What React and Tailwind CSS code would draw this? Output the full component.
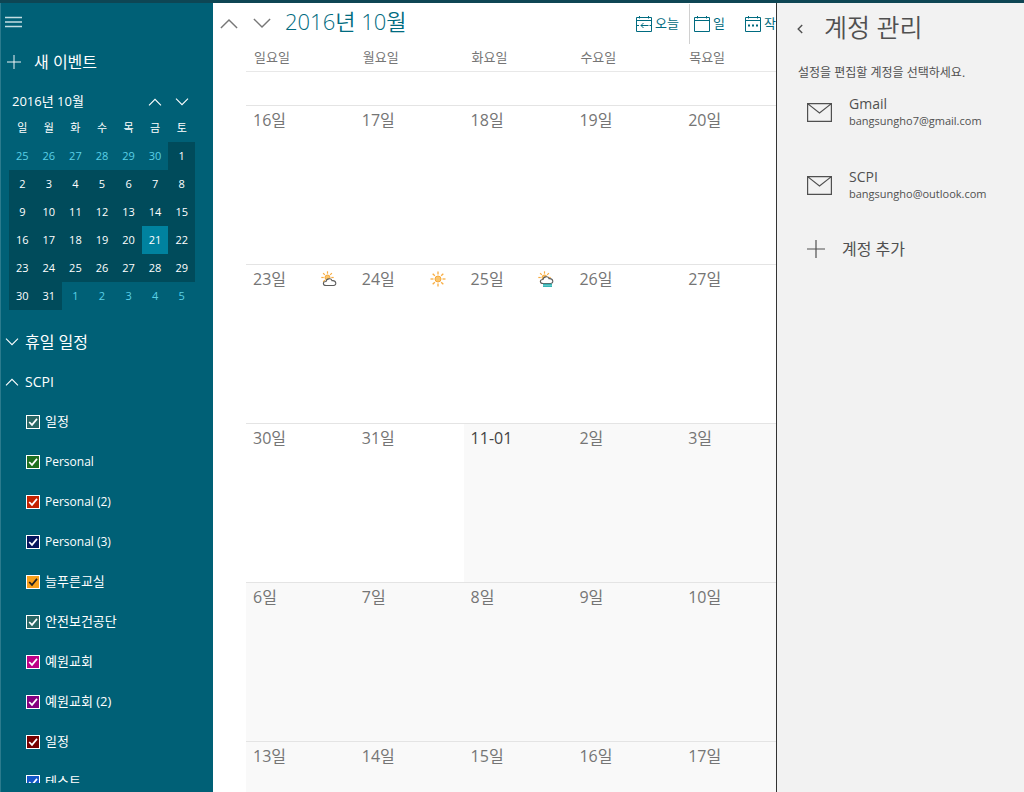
import React from "react";

const weekdays = ["일", "월", "화", "수", "목", "금", "토"];

const miniWeeks = [
  [25, 26, 27, 28, 29, 30, 1],
  [2, 3, 4, 5, 6, 7, 8],
  [9, 10, 11, 12, 13, 14, 15],
  [16, 17, 18, 19, 20, 21, 22],
  [23, 24, 25, 26, 27, 28, 29],
  [30, 31, 1, 2, 3, 4, 5],
];

const weeks = [
  ["16일", "17일", "18일", "19일", "20일"],
  ["23일", "24일", "25일", "26일", "27일"],
  ["30일", "31일", "11-01", "2일", "3일"],
  ["6일", "7일", "8일", "9일", "10일"],
  ["13일", "14일", "15일", "16일", "17일"],
];

const weather = { "23일": "cloud", "24일": "sun", "25일": "fog" };

const calendars = [
  { name: "일정", color: "bg-[#2a6663]" },
  { name: "Personal", color: "bg-[#1f6f20]", latin: true },
  { name: "Personal (2)", color: "bg-[#c42200]", latin: true },
  { name: "Personal (3)", color: "bg-[#07155c]", latin: true },
  { name: "늘푸른교실", color: "bg-[#f9a01b]", dark: true },
  { name: "안전보건공단", color: "bg-[#2a6663]" },
  { name: "예원교회", color: "bg-[#bd0086]" },
  { name: "예원교회 (2)", color: "bg-[#85007f]" },
  { name: "일정", color: "bg-[#760000]" },
  { name: "테스트", color: "bg-[#1456c8]" },
];

const accounts = [
  { name: "Gmail", email: "bangsungho7@gmail.com" },
  { name: "SCPI", email: "bangsungho@outlook.com" },
];

function Chevron({ up = false, className }) {
  return (
    <svg viewBox="0 0 20 12" fill="none" stroke="currentColor" className={className} aria-hidden="true">
      <path d={up ? "M1 11 10 2l9 9" : "M1 1l9 9 9-9"} strokeWidth="1.600" />
    </svg>
  );
}

function Plus({ className }) {
  return (
    <svg viewBox="0 0 18 18" fill="none" stroke="currentColor" className={className} aria-hidden="true">
      <path d="M9 0v18M0 9h18" strokeWidth="1.2" />
    </svg>
  );
}

function CalendarIcon({ kind }) {
  return (
    <svg viewBox="0 0 16 16" fill="none" stroke="currentColor" className="size-4 shrink-0" aria-hidden="true">
      <path d="M.5 1.5h15v14H.5zM.5 4.5h15M3.5 0v2.500M12.500 0v2.500" />
      {kind === "today" && <path d="M12.500 9.500H5M7.500 7l-2.500 2.500 2.500 2.500M1 9.500h2M13.500 9.500H15" />}
      {kind === "workweek" && <path d="M3 9.500h2M7 9.500h2M11 9.500h2" strokeWidth="1.800" />}
    </svg>
  );
}

function Weather({ kind }) {
  const rays = [0, 45, 90, 135, 180, 225, 270, 315];
  if (kind === "sun") {
    return (
      <svg viewBox="0 0 16 16" className="size-4" role="img" aria-label="맑음">
        <circle cx="8" cy="8" r="3" fill="#fbc56d" stroke="#f5a83a" />
        {rays.map((r) => (
          <path key={r} d="M8 .5v3" stroke="#f8ad42" strokeWidth="1.300" transform={`rotate(${r} 8 8)`} />
        ))}
      </svg>
    );
  }
  const fog = kind === "fog";
  return (
    <svg viewBox="0 0 16 16" className="size-4" role="img" aria-label={fog ? "안개" : "구름 조금"}>
      <circle cx="6.500" cy="6.500" r="2.500" fill="#fbc56d" stroke="#f5a83a" />
      {rays.map((r) => (
        <path key={r} d="M6.500 .3v2.400" stroke="#f8ad42" strokeWidth="1.200" transform={`rotate(${r} 6.500 6.500)`} />
      ))}
      <g transform={fog ? "translate(0 -2)" : undefined}>
        <path
          d="M5 14.500c-3.500 0-3.500-4 0-4 .3-3.200 5.200-3.600 6-.8 4.500-.6 5 4.800 1.500 4.800z"
          fill="#fff"
          stroke="#5c5c5c"
          strokeWidth="1.100"
        />
      </g>
      {fog && <path d="M5 13.500h9M5 15.300h9" stroke="#35b5b5" strokeWidth="1.400" />}
    </svg>
  );
}

function MiniCalendar() {
  return (
    <table className="ml-2 w-[186px] table-fixed border-collapse text-center text-[11px]">
      <thead>
        <tr className="h-7">
          {weekdays.map((d) => (
            <th key={d} scope="col" className="p-0 font-normal text-white">{d}</th>
          ))}
        </tr>
      </thead>
      <tbody>
        {miniWeeks.map((week, w) => (
          <tr key={w}>
            {week.map((day, i) => {
              const outside = (w === 0 && day > 20) || (w === 5 && day < 10);
              const today = w === 3 && i === 5;
              const tone = today
                ? "bg-[#00829f] text-white"
                : outside
                  ? "text-[#5bd0e6]"
                  : "bg-[#004b5b] text-white";
              return (
                <td key={i} className="p-0">
                  <button type="button" className={`block h-7 w-full ${tone}`}>{day}</button>
                </td>
              );
            })}
          </tr>
        ))}
      </tbody>
    </table>
  );
}

function Sidebar() {
  return (
    <aside className="flex w-[213px] shrink-0 flex-col border-l border-[#2b7b8d] bg-[#006076] pb-[9px] text-white">
      <button type="button" aria-label="메뉴" className="mt-[13px] ml-1 w-[17px]">
        <svg viewBox="0 0 17 12" fill="none" stroke="#c4dde2" className="block h-3 w-[17px]" aria-hidden="true">
          <path d="M0 1.500h17M0 6h17M0 10.500h17" strokeWidth="1.400" />
        </svg>
      </button>
      <button type="button" className="mt-[14px] ml-1.5 flex h-10 items-center gap-[13px] text-base">
        <Plus className="size-3.5" />
        새 이벤트
      </button>
      <div className="mt-1 flex h-8 items-center pl-[11px]">
        <h2 className="w-[136px] text-[13px]">2016년 10월</h2>
        <button type="button" aria-label="이전 달" className="w-[27px]">
          <Chevron up className="h-2 w-3.5" />
        </button>
        <button type="button" aria-label="다음 달">
          <Chevron className="h-2 w-3.5" />
        </button>
      </div>
      <div className="-mt-1">
        <MiniCalendar />
      </div>
      <button type="button" aria-expanded="false" className="mt-3 flex h-10 items-center gap-1.5 pl-1 text-base">
        <Chevron className="h-2 w-3.5" />
        휴일 일정
      </button>
      <button type="button" aria-expanded="true" className="flex h-10 items-center gap-1.5 pl-1 text-sm">
        <Chevron up className="h-2 w-3.5" />
        SCPI
      </button>
      <ul className="min-h-0 flex-1 overflow-hidden">
        {calendars.map((c, i) => (
          <li key={i}>
            <label className={`flex h-10 items-center gap-[5px] pl-[25px] ${c.latin ? "text-xs" : "text-[13px]"}`}>
              <span className="grid">
                <input
                  type="checkbox"
                  defaultChecked
                  className={`peer col-start-1 row-start-1 size-3.5 appearance-none border border-white ${c.color}`}
                />
                <svg
                  viewBox="0 0 14 14"
                  fill="none"
                  className="pointer-events-none invisible col-start-1 row-start-1 size-3.5 peer-checked:visible"
                  aria-hidden="true"
                >
                  <path d="M3.200 7l2.800 2.900 5-6" stroke={c.dark ? "#222" : "#fff"} strokeWidth="1.700" />
                </svg>
              </span>
              {c.name}
            </label>
          </li>
        ))}
      </ul>
    </aside>
  );
}

function Month() {
  return (
    <main className="min-w-0 flex-1 overflow-hidden bg-white">
      <header className="flex h-[41px] items-center pl-[7px] text-[#006b80]">
        <button type="button" aria-label="이전" className="w-[33px] shrink-0 text-[#777]">
          <Chevron up className="h-[11px] w-[18px]" />
        </button>
        <button type="button" aria-label="다음" className="w-8 shrink-0 text-[#777]">
          <Chevron className="h-[11px] w-[18px]" />
        </button>
        <h1 className="min-w-0 flex-1 pb-1 text-[22px] font-[350] whitespace-nowrap">2016년 10월</h1>
        <div className="flex w-[140px] shrink-0 items-center text-[13px] whitespace-nowrap">
          <button type="button" className="flex w-[53px] shrink-0 items-center gap-[3px]">
            <CalendarIcon kind="today" />
            오늘
          </button>
          <span className="h-10 w-px shrink-0 bg-[#d0d0d0]" />
          <button type="button" className="ml-1 flex w-[51px] shrink-0 items-center gap-[3px]">
            <CalendarIcon />
            일
          </button>
          <button type="button" aria-label="작업 주" className="flex shrink-0 items-center gap-[3px]">
            <CalendarIcon kind="workweek" />
            작
          </button>
        </div>
      </header>
      <div className="pl-[33px]">
        <table className="w-[calc(100%+14px)] table-fixed border-separate border-spacing-0 text-left text-[#757575]">
          <thead>
            <tr>
              {weekdays.slice(0, 5).map((d) => (
                <th key={d} scope="col" className="h-[27px] p-0 pb-0.5 pl-2 text-[13px] leading-5 font-normal">
                  {d}요일
                </th>
              ))}
            </tr>
          </thead>
          <tbody>
            <tr>
              <td colSpan={5} className="h-[34px] border-t border-[#e8e8e8] p-0" />
            </tr>
            {weeks.map((week, w) => (
              <tr key={w}>
                {week.map((day, i) => {
                  const next = w > 2 || (w === 2 && i > 1);
                  return (
                    <td
                      key={day}
                      className={`h-[159px] border-t border-[#e4e4e4] p-0 align-top ${next ? "bg-[#f9f9f9]" : ""}`}
                    >
                      <div className="flex items-center justify-between pt-0.5 pr-[18px] pl-[7px]">
                        <span className={`text-base ${day === "11-01" ? "text-[#444]" : ""}`}>{day}</span>
                        {weather[day] && w === 1 && <Weather kind={weather[day]} />}
                      </div>
                    </td>
                  );
                })}
              </tr>
            ))}
          </tbody>
        </table>
      </div>
    </main>
  );
}

function AccountPanel() {
  return (
    <section className="w-[248px] shrink-0 border-l border-[#333] bg-[#f2f2f2] text-[#505050]">
      <header className="flex h-[47px] items-center pl-5">
        <button type="button" aria-label="뒤로" className="w-[27px]">
          <svg viewBox="0 0 6 10" fill="none" stroke="currentColor" className="mt-1 h-2.5 w-1.5" aria-hidden="true">
            <path d="M5.200 1 1.200 5l4 4" strokeWidth="1.400" />
          </svg>
        </button>
        <h2 className="text-[25px] leading-8 font-[350]">계정 관리</h2>
      </header>
      <p className="mt-[15px] pl-[21px] text-xs leading-4">설정을 편집할 계정을 선택하세요.</p>
      <ul className="mt-1">
        {accounts.map((a) => (
          <li key={a.name} className="h-[73px]">
            <button type="button" className="flex h-[54px] w-full items-center gap-[17px] pl-[30px] text-left">
              <svg viewBox="0 0 25 19" fill="none" stroke="currentColor" className="h-[19px] w-[25px]" aria-hidden="true">
                <path d="M.6.6h23.800v17.800H.6zM.6.6 12.500 10 24.400.6" strokeWidth="1.200" />
              </svg>
              <span>
                <span className="block text-sm leading-[18px]">{a.name}</span>
                <span className="block text-[11px] leading-4">{a.email}</span>
              </span>
            </button>
          </li>
        ))}
      </ul>
      <button type="button" className="flex h-9 items-center gap-[17px] pl-[30px] text-base">
        <Plus className="size-[18px]" />
        계정 추가
      </button>
    </section>
  );
}

export default function App() {
  return (
    <div className="flex h-screen flex-col overflow-hidden font-['Open_Sans','Noto_Sans_CJK_KR',sans-serif]">
      <div className="h-[3px] shrink-0 bg-[#0e4654]" />
      <div className="flex min-h-0 flex-1">
        <Sidebar />
        <Month />
        <AccountPanel />
      </div>
    </div>
  );
}
